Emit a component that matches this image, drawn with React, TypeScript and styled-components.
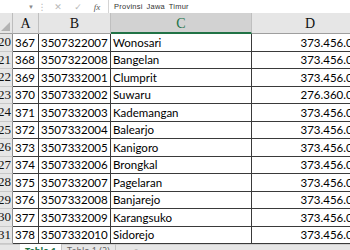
import React from "react";
import styled, { createGlobalStyle } from "styled-components";

const GlobalStyle = createGlobalStyle`
  html, body { margin: 0; padding: 0; background: #ffffff; overflow: hidden; }
  * { box-sizing: border-box; }
`;

const Root = styled.div`
  width: 350px;
  height: 250px;
  overflow: hidden;
  display: flex;
  flex-direction: column;
  background: #ffffff;
`;

const FormulaBar = styled.div`
  height: 13px;
  flex-shrink: 0;
  display: flex;
  align-items: flex-end;
  background: #ffffff;
  font-family: "Liberation Sans", Arial, sans-serif;
`;

const NameBox = styled.div`
  width: 36px;
  height: 13px;
  display: flex;
  justify-content: flex-end;
  align-items: center;
  padding-right: 2px;
  color: #8a8a8a;
  font-size: 6px;
`;

const Tool = styled.div<{ $w: number; $c?: string; $italic?: boolean; $serif?: boolean }>`
  width: ${(p) => p.$w}px;
  height: 13px;
  display: flex;
  justify-content: center;
  align-items: center;
  color: ${(p) => p.$c || "#b8b8b8"};
  font-size: 9px;
  font-style: ${(p) => (p.$italic ? "italic" : "normal")};
  font-family: ${(p) => (p.$serif ? '"Liberation Serif", serif' : '"DejaVu Sans", sans-serif')};
`;

const Divider = styled.div`
  width: 1px;
  height: 13px;
  background: #d4d4d4;
  margin-left: 2px;
`;

const FormulaText = styled.div`
  padding-left: 5px;
  font-size: 7.5px;
  letter-spacing: 0.25px;
  word-spacing: 1.5px;
  color: #333333;
  line-height: 13px;
  height: 13px;
  white-space: nowrap;
`;

const Sheet = styled.div`
  height: 231px;
  flex-shrink: 0;
  overflow: hidden;
  display: grid;
  grid-template-columns: 13px 26px 72px 141px 117px;
  grid-template-rows: 21px repeat(12, 17.5px);
`;

const Corner = styled.div`
  background: #e6e6e6;
  border-right: 1px solid #bdbdbd;
  border-bottom: 1px solid #9e9e9e;
  display: flex;
  align-items: flex-end;
  justify-content: flex-end;
  padding: 0 2px 2px 0;
`;

const ColHeader = styled.div<{ $active?: boolean }>`
  background: ${(p) => (p.$active ? "#d2d2d2" : "#e6e6e6")};
  border-right: 1px solid #bfbfbf;
  border-bottom: ${(p) => (p.$active ? "2px solid #217346" : "1px solid #9e9e9e")};
  color: ${(p) => (p.$active ? "#217346" : "#111111")};
  font-family: "Liberation Serif", "Times New Roman", serif;
  font-size: 14px;
  display: flex;
  justify-content: center;
  align-items: center;
  padding-top: 2px;
`;

const RowHeader = styled.div`
  background: #e6e6e6;
  border-right: 1px solid #8f8f8f;
  border-bottom: 1px solid #c8c8c8;
  color: #111111;
  font-family: "Liberation Serif", "Times New Roman", serif;
  font-size: 13px;
  display: flex;
  justify-content: flex-end;
  align-items: center;
  padding-right: 1px;
  overflow: hidden;
  white-space: nowrap;
`;

const Cell = styled.div<{ $right?: boolean }>`
  border-right: 1px solid #3a3a3a;
  border-bottom: 1px solid #3a3a3a;
  font-family: Lato, "Liberation Sans", sans-serif;
  font-size: 11.5px;
  color: #000000;
  display: flex;
  align-items: center;
  justify-content: ${(p) => (p.$right ? "flex-end" : "flex-start")};
  padding: 0 2px;
  white-space: nowrap;
  overflow: hidden;
`;

const TabBar = styled.div`
  height: 22px;
  flex-shrink: 0;
  background: #e6e6e6;
  border-top: 1px solid #cfcfcf;
  display: flex;
  align-items: flex-start;
  font-family: "Noto Sans", "Open Sans", sans-serif;
  font-size: 9px;
`;

const NavArrows = styled.div`
  width: 20px;
  display: flex;
  justify-content: space-around;
  color: #c4c4c4;
  font-size: 6px;
  line-height: 12px;
  padding-top: 1px;
`;

const Tab = styled.div<{ $active?: boolean }>`
  height: 20px;
  padding: 1px 5px 0;
  margin-top: -1px;
  background: ${(p) => (p.$active ? "#ffffff" : "transparent")};
  color: ${(p) => (p.$active ? "#217346" : "#666666")};
  font-weight: ${(p) => (p.$active ? 700 : 400)};
  border-right: 1px solid #c4c4c4;
  line-height: 12px;
  white-space: nowrap;
`;

const AddTab = styled.div`
  margin-left: 16px;
  color: #8a8a8a;
  font-size: 10px;
  line-height: 12px;
  padding-top: 1px;
`;

const rows: [number, number, string, string, string][] = [
  [20, 367, "3507322007", "Wonosari", "373.456.000"],
  [21, 368, "3507322008", "Bangelan", "373.456.000"],
  [22, 369, "3507332001", "Clumprit", "373.456.000"],
  [23, 370, "3507332002", "Suwaru", "276.360.000"],
  [24, 371, "3507332003", "Kademangan", "373.456.000"],
  [25, 372, "3507332004", "Balearjo", "373.456.000"],
  [26, 373, "3507332005", "Kanigoro", "373.456.000"],
  [27, 374, "3507332006", "Brongkal", "373.456.000"],
  [28, 375, "3507332007", "Pagelaran", "373.456.000"],
  [29, 376, "3507332008", "Banjarejo", "373.456.000"],
  [30, 377, "3507332009", "Karangsuko", "373.456.000"],
  [31, 378, "3507332010", "Sidorejo", "373.456.000"],
];

export default function App() {
  return (
    <Root>
      <GlobalStyle />
      <FormulaBar>
        <NameBox>▼</NameBox>
        <Tool $w={12}>⋮</Tool>
        <Tool $w={20}>✕</Tool>
        <Tool $w={20}>✓</Tool>
        <Tool $w={18} $c="#555555" $italic $serif>
          fx
        </Tool>
        <Divider />
        <FormulaText>Provinsi Jawa Timur</FormulaText>
      </FormulaBar>
      <Sheet>
        <Corner>
          <svg width="9" height="9" viewBox="0 0 9 9">
            <polygon points="9,0 9,9 0,9" fill="#b3b3b3" />
          </svg>
        </Corner>
        <ColHeader>A</ColHeader>
        <ColHeader>B</ColHeader>
        <ColHeader $active>C</ColHeader>
        <ColHeader>D</ColHeader>
        {rows.map(([n, no, code, name, val]) => (
          <React.Fragment key={n}>
            <RowHeader>{n}</RowHeader>
            <Cell>{no}</Cell>
            <Cell>{code}</Cell>
            <Cell>{name}</Cell>
            <Cell $right>{val}</Cell>
          </React.Fragment>
        ))}
      </Sheet>
      <TabBar>
        <NavArrows>
          <span>◀</span>
          <span>▶</span>
        </NavArrows>
        <Tab $active>Table 1</Tab>
        <Tab>Table 1 (2)</Tab>
        <AddTab>⊕</AddTab>
      </TabBar>
    </Root>
  );
}
